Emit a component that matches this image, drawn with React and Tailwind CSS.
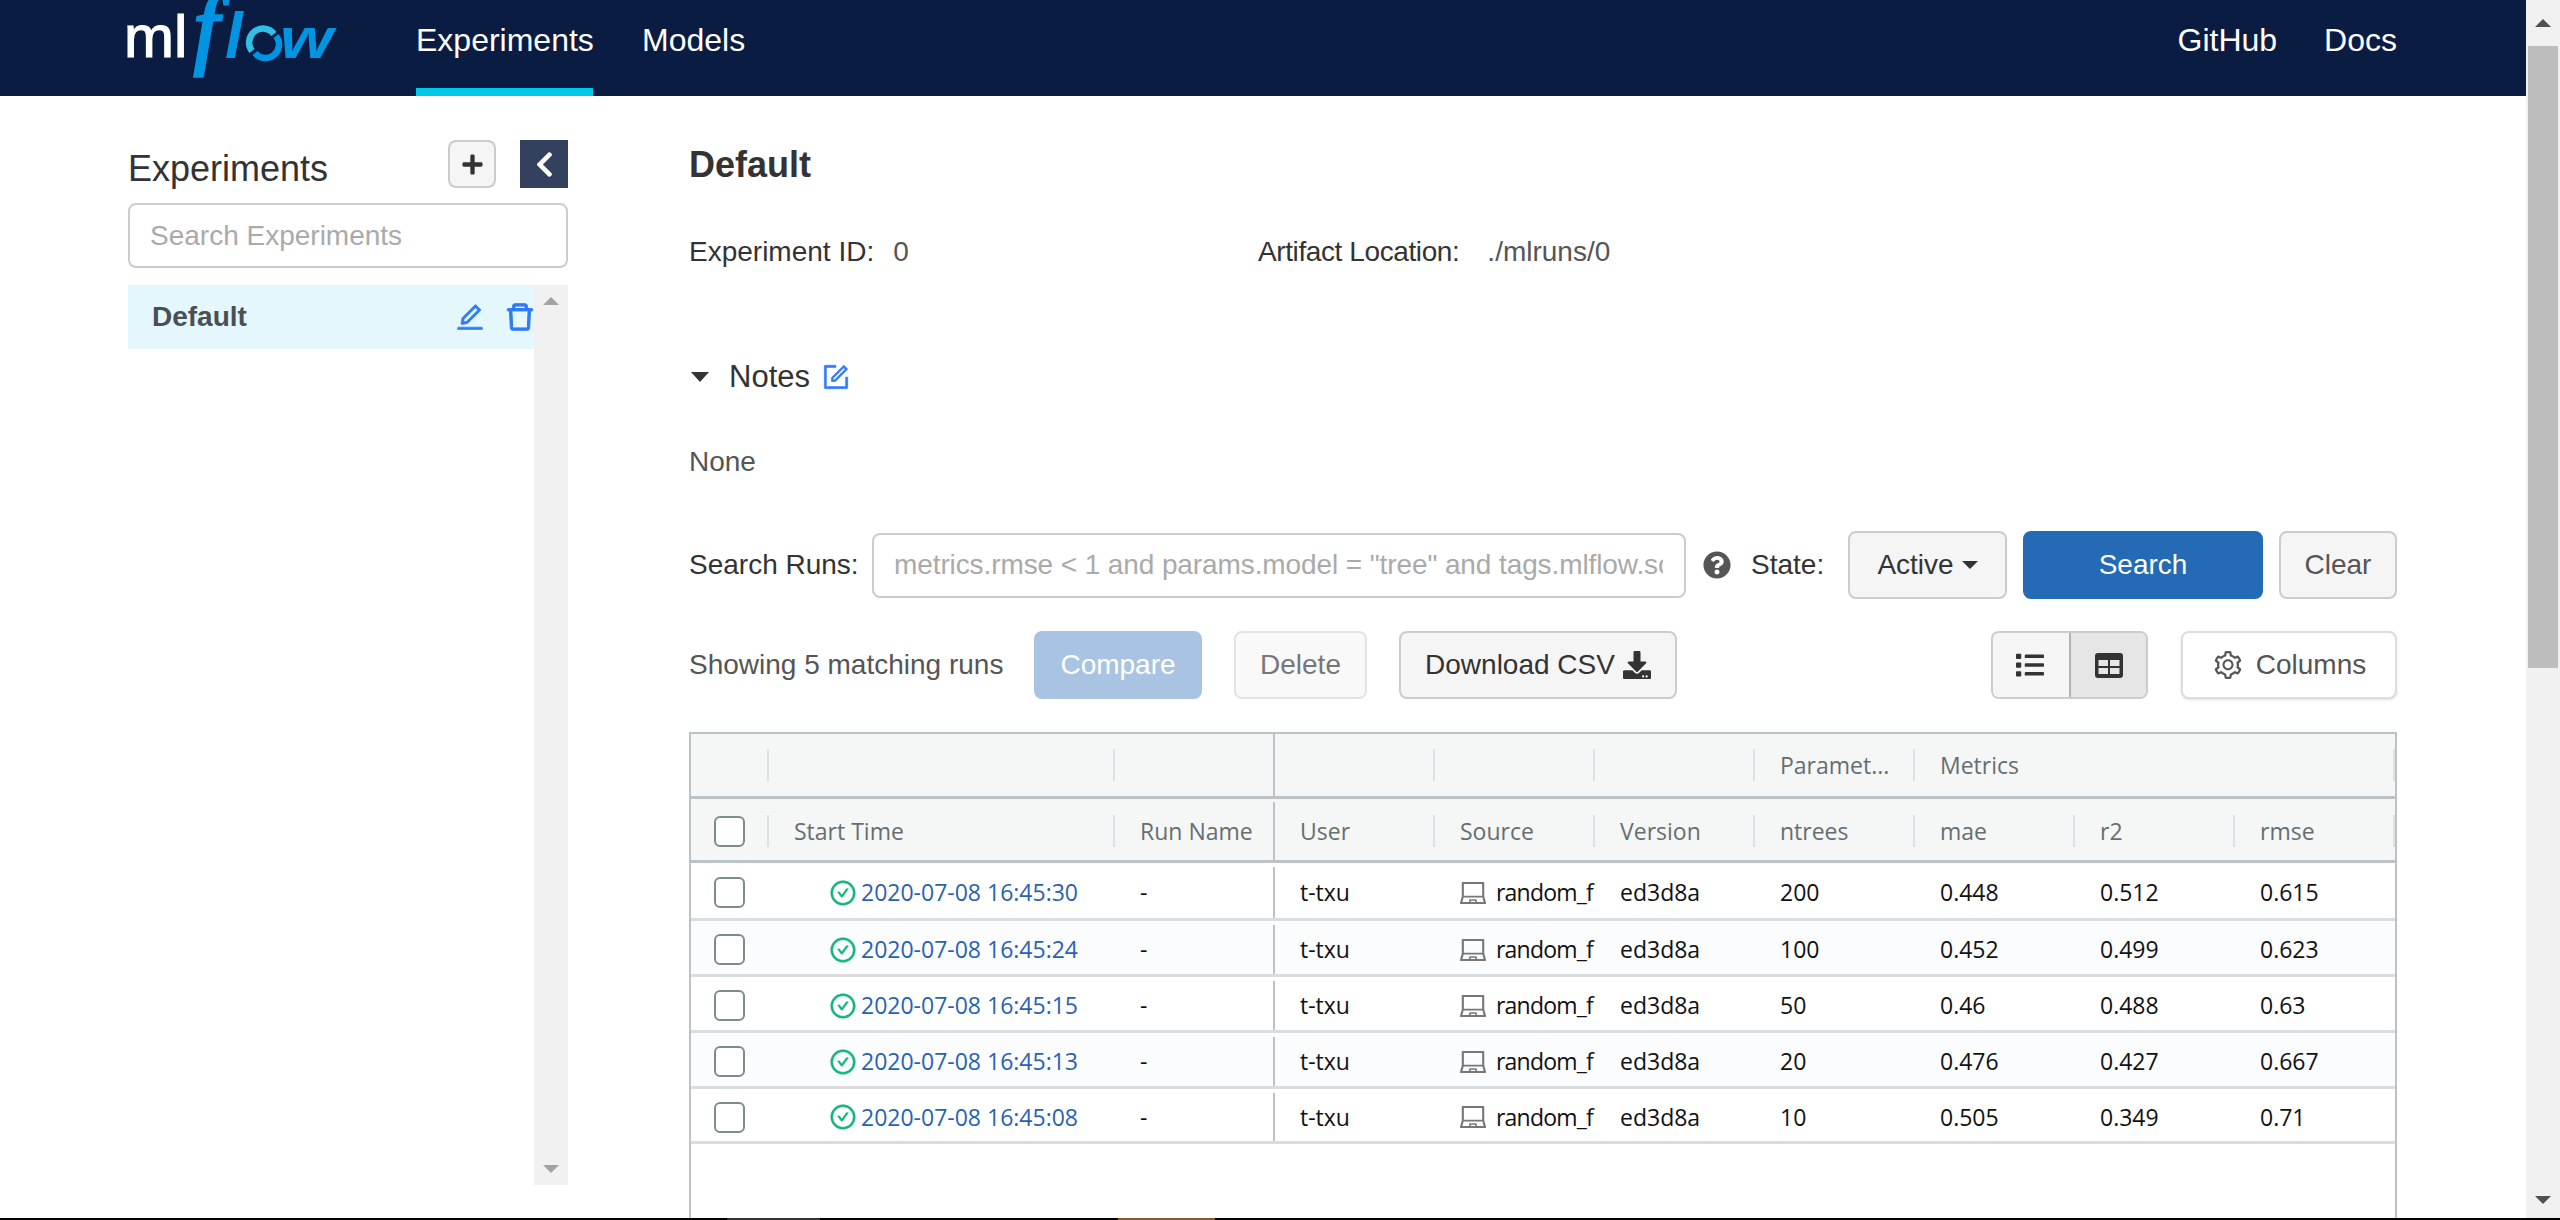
import { FaChevronLeft, FaDownload, FaList, FaPlus, FaQuestionCircle } from 'react-icons/fa';
import {
  AiOutlineCheckCircle,
  AiOutlineDelete,
  AiOutlineEdit,
  AiOutlineForm,
  AiOutlineLaptop,
  AiOutlineSetting,
} from 'react-icons/ai';

const runs = [
  { time: '2020-07-08 16:45:30', ntrees: '200', mae: '0.448', r2: '0.512', rmse: '0.615', height: 'h-[58px]' },
  { time: '2020-07-08 16:45:24', ntrees: '100', mae: '0.452', r2: '0.499', rmse: '0.623', height: 'h-[56px]', alt: true },
  { time: '2020-07-08 16:45:15', ntrees: '50', mae: '0.46', r2: '0.488', rmse: '0.63', height: 'h-[56px]' },
  { time: '2020-07-08 16:45:13', ntrees: '20', mae: '0.476', r2: '0.427', rmse: '0.667', height: 'h-[56px]', alt: true },
  { time: '2020-07-08 16:45:08', ntrees: '10', mae: '0.505', r2: '0.349', rmse: '0.71', height: 'h-[55px]' },
];

function Logo() {
  return (
    <svg width="240" height="96" viewBox="0 0 240 96" className="shrink-0">
      <text x="14" y="57" fontFamily="Liberation Sans" fontSize="60" fill="#fff" stroke="#fff" strokeWidth="1.2">ml</text>
      <text x="84" y="57" fontFamily="Liberation Serif" fontStyle="italic" fontSize="88" fill="#0194e2" stroke="#0194e2" strokeWidth="3.5">f</text>
      <text x="115" y="58" fontFamily="Liberation Sans" fontStyle="italic" fontWeight="700" fontSize="64" fill="#0194e2">l</text>
      <path d="M142 51 A13 13 0 0 1 164 34" fill="none" stroke="#2fbfe8" strokeWidth="6.5" />
      <path d="M166 36 A13 13 0 0 1 145 53" fill="none" stroke="#0194e2" strokeWidth="6.5" />
      <text x="170" y="58" fontFamily="Liberation Sans" fontStyle="italic" fontWeight="700" fontSize="58" textLength="53" lengthAdjust="spacingAndGlyphs" fill="#0194e2">w</text>
    </svg>
  );
}

function TableIcon() {
  return (
    <svg width="28" height="25" viewBox="0 0 28 25">
      <rect width="28" height="25" rx="3" fill="#333" />
      <rect x="3.5" y="7" width="9.5" height="6" fill="#e6e6e6" />
      <rect x="15" y="7" width="9.5" height="6" fill="#e6e6e6" />
      <rect x="3.5" y="15" width="9.5" height="6" fill="#e6e6e6" />
      <rect x="15" y="15" width="9.5" height="6" fill="#e6e6e6" />
    </svg>
  );
}

function Checkbox() {
  return <div className="w-[31px] h-[31px] rounded-md border-2 border-[#7f8c8d] bg-white" />;
}

function Header() {
  return (
    <div className="h-[96px] bg-[#0b1c42] flex pl-[110px] pr-[129px] text-white text-[32px] shrink-0">
      <Logo />
      <div className="ml-[66px] w-[177px] h-full border-b-8 border-[#00c8e8] pt-4 whitespace-nowrap">Experiments</div>
      <div className="ml-[49px] pt-4">Models</div>
      <div className="ml-auto pt-4">GitHub</div>
      <div className="ml-[47px] pt-4">Docs</div>
    </div>
  );
}

function Sidebar() {
  return (
    <div className="w-[440px] ml-[128px] mr-[121px] shrink-0 flex flex-col pt-11">
      <div className="flex items-center h-12">
        <div className="text-[36px] text-[#333] flex-1 pt-[10px]">Experiments</div>
        <button className="w-12 h-12 rounded-lg border-2 border-[#ccc] bg-[#f5f5f5] flex items-center justify-center text-[#333]">
          <FaPlus size={23} />
        </button>
        <button className="w-12 h-12 ml-6 bg-[#33415e] flex items-center justify-center text-white">
          <FaChevronLeft size={29} />
        </button>
      </div>
      <input
        placeholder="Search Experiments"
        className="mt-[15px] h-[65px] w-full rounded-lg border-2 border-[#ccc] px-[20px] text-[28px] outline-none placeholder:text-[#aaa]"
      />
      <div className="mt-[17px] h-[900px] flex">
        <div className="flex-1">
          <div className="h-16 bg-[#e3f7fc] flex items-center pl-6">
            <span className="flex-1 text-[28px] font-bold text-[#4a4f54]">Default</span>
            <AiOutlineEdit size={32} stroke="currentColor" strokeWidth={20} className="text-[#2e7cf6]" />
            <AiOutlineDelete size={34} stroke="currentColor" strokeWidth={30} className="text-[#2e7cf6] ml-[17px] -mr-[3px]" />
          </div>
        </div>
        <div className="w-[34px] bg-[#f1f1f1] flex flex-col items-center justify-between py-3">
          <div className="w-0 h-0 border-x-8 border-b-8 border-x-transparent border-b-[#a3a3a3]" />
          <div className="w-0 h-0 border-x-8 border-t-8 border-x-transparent border-t-[#a3a3a3]" />
        </div>
      </div>
    </div>
  );
}

function Btn({ className, children }) {
  return (
    <button className={`h-[68px] rounded-lg border-2 flex items-center justify-center text-[28px] shrink-0 ${className}`}>
      {children}
    </button>
  );
}

function HeadCell({ className = 'w-[160px]', sep = true, children }) {
  return (
    <div className={`${className} h-full flex items-center shrink-0`}>
      <div className="flex-1 pl-[25px] whitespace-nowrap overflow-hidden">{children}</div>
      {sep && <div className="w-[2px] h-8 bg-[#dde1e3]" />}
    </div>
  );
}

function Cell({ children }) {
  return <div className="w-[160px] pl-[25px] shrink-0 whitespace-nowrap">{children}</div>;
}

function RunsTable() {
  return (
    <div className="mt-[33px] border-x-2 border-t-2 border-[#bbc3c7] flex-1 font-['Open_Sans',sans-serif] text-[23px] text-[#111]">
      <div className="h-[65px] bg-[#f5f7f7] border-b-[3px] border-[#bbc3c7] flex text-[#666e72]">
        <HeadCell className="w-[78px]" />
        <HeadCell className="w-[346px]" />
        <HeadCell className="w-[160px] border-r-2 border-[#bbc3c7]" sep={false} />
        <HeadCell />
        <HeadCell />
        <HeadCell />
        <HeadCell>Paramet...</HeadCell>
        <HeadCell className="w-[480px]">Metrics</HeadCell>
      </div>
      <div className="h-[64px] pt-[3px] bg-[#f5f7f7] border-b-[3px] border-[#bbc3c7] flex text-[#666e72]">
        <div className="w-[78px] h-full flex items-center shrink-0">
          <div className="flex-1 pl-[23px]"><Checkbox /></div>
          <div className="w-[2px] h-8 bg-[#dde1e3]" />
        </div>
        <HeadCell className="w-[346px]">Start Time</HeadCell>
        <div className="w-[160px] h-full pl-[25px] flex items-center border-r-2 border-[#bbc3c7] shrink-0 whitespace-nowrap">Run Name</div>
        <HeadCell>User</HeadCell>
        <HeadCell>Source</HeadCell>
        <HeadCell>Version</HeadCell>
        <HeadCell>ntrees</HeadCell>
        <HeadCell>mae</HeadCell>
        <HeadCell>r2</HeadCell>
        <HeadCell>rmse</HeadCell>
      </div>
      {runs.map((run) => (
        <div key={run.time} className={`${run.height} pt-1 flex items-center border-b-[3px] border-[#d9dde0] ${run.alt ? 'bg-[#fafcfe]' : 'bg-white'}`}>
          <div className="w-[78px] pl-[23px] shrink-0"><Checkbox /></div>
          <div className="w-[346px] pl-[60px] shrink-0 flex items-center whitespace-nowrap text-[#2a62b0]">
            <AiOutlineCheckCircle size={28} stroke="currentColor" strokeWidth={20} className="text-[#10b57a] mr-[4px]" />
            {run.time}
          </div>
          <div className="w-[160px] h-full pl-[25px] flex items-center border-r-2 border-[#bbc3c7] shrink-0">-</div>
          <Cell>t-txu</Cell>
          <div className="w-[160px] pl-[23px] shrink-0 flex items-center whitespace-nowrap">
            <AiOutlineLaptop size={30} className="text-[#777] mr-[8px] shrink-0" />
            <span className="tracking-[-0.8px]">random_f</span>
          </div>
          <Cell>ed3d8a</Cell>
          <Cell>{run.ntrees}</Cell>
          <Cell>{run.mae}</Cell>
          <Cell>{run.r2}</Cell>
          <Cell>{run.rmse}</Cell>
        </div>
      ))}
    </div>
  );
}

function Content() {
  return (
    <div className="w-[1708px] shrink-0 flex flex-col text-[28px] text-[#333]">
      <h1 className="mt-[48px] h-[42px] text-[36px] font-bold leading-[42px]">Default</h1>
      <div className="mt-[50px] flex h-8 leading-8">
        <div className="w-[569px] flex">
          <span>Experiment ID:</span>
          <span className="ml-[19px] text-[#555]">0</span>
        </div>
        <span className="tracking-[-0.4px]">Artifact Location:</span>
        <span className="ml-[28px] text-[#555]">./mlruns/0</span>
      </div>
      <div className="mt-[89px] h-10 flex items-center">
        <div className="w-0 h-0 ml-[2px] border-x-[9px] border-t-[10px] border-x-transparent border-t-[#333]" />
        <span className="ml-[20px] text-[31px]">Notes</span>
        <AiOutlineForm size={30} stroke="currentColor" strokeWidth={20} className="ml-[11px] text-[#2e7cf6]" />
      </div>
      <div className="mt-[49px] h-8 leading-8 text-[#555]">None</div>
      <div className="mt-[53px] h-[68px] flex items-center">
        <span className="whitespace-nowrap w-[183px] shrink-0">Search Runs:</span>
        <input
          placeholder={'metrics.rmse < 1 and params.model = "tree" and tags.mlflow.source.type = "LOCAL"'}
          className="w-[814px] h-[65px] shrink-0 rounded-lg border-2 border-[#ccc] pl-[20px] pr-[21px] text-[28px] tracking-[-0.1px] outline-none placeholder:text-[#aaa]"
        />
        <FaQuestionCircle size={28} className="ml-[17px] text-[#555] shrink-0" />
        <span className="ml-[20px] w-[97px] shrink-0">State:</span>
        <Btn className="w-[159px] border-[#ccc] bg-[#f5f5f5]">
          Active
          <span className="ml-2 w-0 h-0 border-x-[8px] border-t-[8px] border-x-transparent border-t-[#333]" />
        </Btn>
        <Btn className="w-[240px] ml-4 border-[#256ab5] bg-[#256ab5] text-white">Search</Btn>
        <Btn className="w-[118px] ml-4 border-[#ccc] bg-[#f5f5f5] text-[#555]">Clear</Btn>
      </div>
      <div className="mt-[32px] h-[68px] flex items-center">
        <span className="w-[345px] shrink-0 whitespace-nowrap text-[#555]">Showing 5 matching runs</span>
        <Btn className="w-[168px] border-[#a8c4e2] bg-[#a8c4e2] text-white">Compare</Btn>
        <Btn className="w-[133px] ml-8 border-[#e3e3e3] bg-[#f9f9f9] text-[#777]">Delete</Btn>
        <Btn className="w-[278px] ml-8 border-[#ccc] bg-[#f5f5f5] text-[#333]">
          Download CSV
          <FaDownload size={28} className="ml-[8px]" />
        </Btn>
        <div className="ml-auto h-[68px] w-[157px] flex rounded-lg border-2 border-[#ccc] overflow-hidden">
          <div className="w-[76px] pr-[3px] bg-[#f5f5f5] flex items-center justify-center text-[#333]">
            <FaList size={28} />
          </div>
          <div className="flex-1 bg-[#e6e6e6] border-l-2 border-[#b3b3b3] flex items-center justify-center">
            <TableIcon />
          </div>
        </div>
        <Btn className="w-[216px] ml-[33px] border-[#ddd] bg-white text-[#555] shadow-sm">
          <AiOutlineSetting size={32} className="mr-[12px]" />
          Columns
        </Btn>
      </div>
      <RunsTable />
    </div>
  );
}

function PageScrollbar() {
  return (
    <div className="w-[34px] bg-[#f1f1f1] flex flex-col items-center shrink-0">
      <div className="h-[46px] w-full flex items-center justify-center">
        <div className="w-0 h-0 border-x-8 border-b-8 border-x-transparent border-b-[#505050]" />
      </div>
      <div className="h-[622px] w-[30px] bg-[#bdbdbd]" />
      <div className="mt-auto h-[36px] w-full flex items-center justify-center">
        <div className="w-0 h-0 border-x-8 border-t-8 border-x-transparent border-t-[#505050]" />
      </div>
    </div>
  );
}

export default function App() {
  return (
    <div className="h-[1220px] w-[2560px] overflow-hidden flex flex-col bg-white font-['Liberation_Sans',sans-serif]">
      <div className="flex flex-1 min-h-0">
        <div className="w-[2526px] flex flex-col shrink-0">
          <Header />
          <div className="flex flex-1 min-h-0">
            <Sidebar />
            <Content />
          </div>
        </div>
        <PageScrollbar />
      </div>
      <div className="h-[2px] bg-black flex shrink-0">
        <div className="ml-[727px] w-[93px] bg-[#333]" />
        <div className="ml-[298px] w-[97px] bg-[#8a5a2b]" />
      </div>
    </div>
  );
}
